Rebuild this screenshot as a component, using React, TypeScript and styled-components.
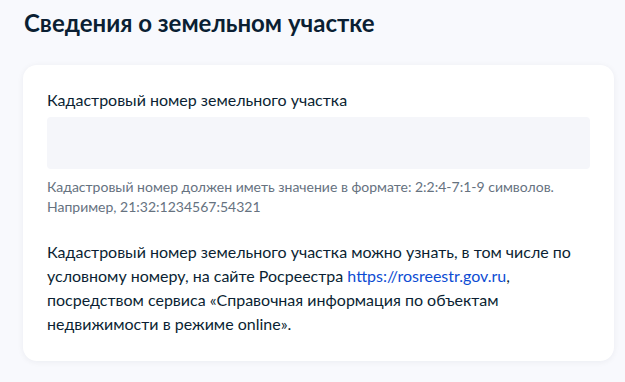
import React from "react";
import styled, { createGlobalStyle } from "styled-components";

const Global = createGlobalStyle`
  html, body { margin: 0; padding: 0; background: #f8f9fd; }
  body { font-family: Lato, "Noto Sans", sans-serif; color: #0b1f33; }
`;

const Page = styled.div`
  padding: 7px 11px 20px 23px;
  display: flex;
  flex-direction: column;
  gap: 26px;
`;

const Title = styled.h1`
  margin: 0 0 0 1px;
  font-size: 24px;
  line-height: 32px;
  font-weight: 700;
  color: #0b1f33;
`;

const Card = styled.section`
  background: #fff;
  border-radius: 14px;
  box-shadow: 0 1px 6px rgba(11, 31, 51, 0.06);
  padding: 23px 24px 25px;
  display: flex;
  flex-direction: column;
`;

const Label = styled.label`
  font-size: 16px;
  line-height: 24px;
  margin-bottom: 5px;
`;

const Input = styled.div`
  height: 52px;
  background: #f5f6fa;
  border-radius: 4px;
`;

const Hint = styled.p`
  margin: 8px 0 0;
  font-size: 14px;
  line-height: 20px;
  color: #66727f;
`;

const Body = styled.p`
  margin: 23px 0 0;
  font-size: 16px;
  line-height: 24px;
  color: #0b1f33;
`;

const Link = styled.a`
  color: #0d4cd3;
  text-decoration: none;
`;

export default function App() {
  return (
    <>
      <Global />
      <Page>
        <Title>Сведения о земельном участке</Title>
        <Card>
          <Label>Кадастровый номер земельного участка</Label>
          <Input />
          <Hint>
            Кадастровый номер должен иметь значение в формате: 2:2:4-7:1-9 символов.
            <br />
            Например, 21:32:1234567:54321
          </Hint>
          <Body>
            Кадастровый номер земельного участка можно узнать, в том числе по
            условному номеру, на сайте Росреестра{" "}
            <Link href="#">https://rosreestr.gov.ru</Link>,
            <br />
            посредством сервиса «Справочная информация по объектам
            недвижимости в режиме online».
          </Body>
        </Card>
      </Page>
    </>
  );
}
